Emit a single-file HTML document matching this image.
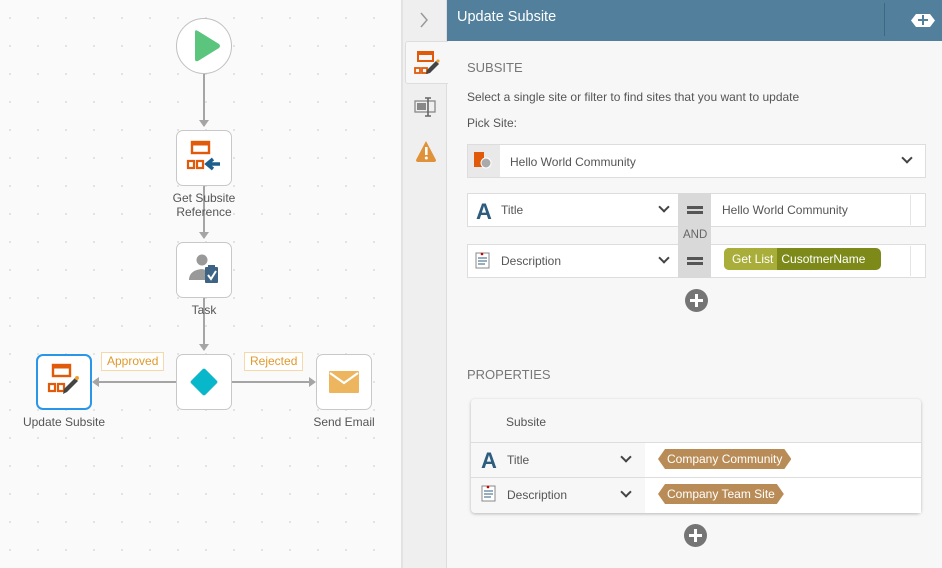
<!DOCTYPE html>
<html><head><meta charset="utf-8"><style>
*{box-sizing:border-box;margin:0;padding:0}
body{width:942px;height:568px;overflow:hidden;font-family:"Liberation Sans",sans-serif;font-size:12px;color:#555;position:relative;background:#fafafa}
.abs{position:absolute}
.canvas{left:0;top:0;width:402px;height:568px;background-color:#fafafa;background-image:radial-gradient(#d8d8d8 0.7px,transparent 1.1px);background-size:28px 28px;background-position:-4px 4px}
.node{position:absolute;width:56px;height:56px;border:1px solid #c8c8c8;border-radius:7px;background:#fff}
.lbl{position:absolute;font-size:12px;color:#555;text-align:center;width:120px}
.tag{position:absolute;border:1px solid #f5d9a8;background:#fff;color:#e09a2a;font-size:12px;height:19px;line-height:17px;padding:0 5px}
.box{position:absolute;background:#fff;border:1px solid #ddd}
.chev{position:absolute;width:8px;height:8px;border-right:2px solid #444;border-bottom:2px solid #444;transform:rotate(45deg)}
.eq{position:absolute;width:16px;height:8px;border-top:3px solid #555;border-bottom:3px solid #555}
.plus{position:absolute;width:23px;height:23px;border-radius:50%;background:#757575}
.plus:before{content:"";position:absolute;left:5px;top:10px;width:13px;height:3px;background:#fff}
.plus:after{content:"";position:absolute;left:10px;top:5px;width:3px;height:13px;background:#fff}
.pill{position:absolute;height:20px;line-height:20px;color:#fff;font-size:12px;background:#b98c57;padding:0 9px;clip-path:polygon(7px 0,calc(100% - 7px) 0,100% 50%,calc(100% - 7px) 100%,7px 100%,0 50%)}
</style></head><body>
<div class="abs canvas"></div>
<div class="abs" style="left:203px;top:74px;width:2px;height:52px;background:#a5a5a5"></div>
<div class="abs" style="left:199px;top:120px;border:5px solid transparent;border-top:7px solid #a5a5a5;border-bottom:0"></div>
<div class="abs" style="left:203px;top:186px;width:2px;height:52px;background:#a5a5a5"></div>
<div class="abs" style="left:199px;top:232px;border:5px solid transparent;border-top:7px solid #a5a5a5;border-bottom:0"></div>
<div class="abs" style="left:203px;top:298px;width:2px;height:52px;background:#a5a5a5"></div>
<div class="abs" style="left:199px;top:344px;border:5px solid transparent;border-top:7px solid #a5a5a5;border-bottom:0"></div>
<div class="abs" style="left:98px;top:381px;width:78px;height:2px;background:#a5a5a5"></div>
<div class="abs" style="left:92px;top:377px;border:5px solid transparent;border-right:7px solid #a5a5a5;border-left:0"></div>
<div class="abs" style="left:232px;top:381px;width:78px;height:2px;background:#a5a5a5"></div>
<div class="abs" style="left:309px;top:377px;border:5px solid transparent;border-left:7px solid #a5a5a5;border-right:0"></div>
<div class="abs" style="left:176px;top:18px;width:56px;height:56px;border-radius:50%;border:1px solid #c0c0c0;background:#fff"></div>
<svg class="abs" style="left:192px;top:29px" width="30" height="34"><path d="M3 3 Q3 0 6 2 L27 15 Q29 17 27 19 L6 32 Q3 33 3 30Z" fill="#5bc57e"/></svg>
<div class="node" style="left:176px;top:130px"></div>
<svg class="abs" style="left:186px;top:140px" width="36" height="36"><rect x="6" y="2" width="17" height="11" fill="none" stroke="#e05a0a" stroke-width="2.4"/><rect x="6" y="2" width="17" height="3.5" fill="#e05a0a"/><rect x="2" y="21" width="6" height="7" fill="none" stroke="#e05a0a" stroke-width="2.2"/><rect x="11" y="21" width="6" height="7" fill="none" stroke="#e05a0a" stroke-width="2.2"/><path d="M34 24 H24 M27 19 L21 24 L27 29" stroke="#1d5f8c" stroke-width="3.5" fill="none"/></svg>
<div class="lbl" style="left:144px;top:191px">Get Subsite</div>
<div class="lbl" style="left:144px;top:205px">Reference</div>
<div class="node" style="left:176px;top:242px"></div>
<svg class="abs" style="left:186px;top:252px" width="36" height="36"><circle cx="16" cy="8" r="5.5" fill="#999"/><path d="M3 27 Q4 18 16 17 L20 18 L20 28 L3 28Z" fill="#999"/><rect x="19" y="15" width="13" height="16" rx="1" fill="#3e6385"/><rect x="22" y="13" width="7" height="3" fill="#3e6385"/><path d="M22 23 L25 27 L30 19" stroke="#fff" stroke-width="2" fill="none"/></svg>
<div class="lbl" style="left:144px;top:303px">Task</div>
<div class="node" style="left:176px;top:354px"></div>
<div class="abs" style="left:194px;top:372px;width:20px;height:20px;background:#09b7cb;transform:rotate(45deg);border-radius:2px"></div>
<div class="node" style="left:36px;top:354px;border:2px solid #2a96e8"></div>
<svg class="abs" style="left:46px;top:363px" width="36" height="36"><rect x="7" y="2" width="17" height="11" fill="none" stroke="#e05a0a" stroke-width="2.4"/><rect x="7" y="2" width="17" height="3.5" fill="#e05a0a"/><rect x="3" y="21" width="6" height="7" fill="none" stroke="#e05a0a" stroke-width="2.2"/><rect x="12" y="21" width="6" height="7" fill="none" stroke="#e05a0a" stroke-width="2.2"/><path d="M17 31 L18 26 L29 15 L32 18 L21 29Z" fill="#444"/><circle cx="31" cy="15" r="2" fill="#f0a030"/></svg>
<div class="lbl" style="left:4px;top:415px">Update Subsite</div>
<div class="node" style="left:316px;top:354px"></div>
<svg class="abs" style="left:328px;top:370px" width="32" height="24"><rect x="1" y="1" width="30" height="22" rx="1" fill="#ecb55e"/><path d="M2 3 L16 13 L30 3" stroke="#fff" stroke-width="2.2" fill="none"/></svg>
<div class="lbl" style="left:284px;top:415px">Send Email</div>
<div class="tag" style="left:101px;top:352px">Approved</div>
<div class="tag" style="left:244px;top:352px">Rejected</div>

<div class="abs" style="left:401px;top:0;width:2px;height:568px;background:#e2e2e2"></div>
<div class="abs" style="left:403px;top:0;width:44px;height:568px;background:#efefef;border-right:1px solid #ddd"></div>
<div class="abs" style="left:447px;top:0;width:495px;height:568px;background:#f7f7f7"></div>
<div class="abs" style="left:447px;top:0;width:495px;height:41px;background:#52809c"></div>
<div class="abs" style="left:457px;top:9px;color:#fff;font-size:14.5px">Update Subsite</div>
<div class="abs" style="left:884px;top:3px;width:1px;height:33px;background:#3f6780"></div>
<div class="abs" style="left:911px;top:14px;width:24px;height:13px;background:#fff;clip-path:polygon(5px 0,19px 0,100% 50%,19px 100%,5px 100%,0 50%)"></div>
<div class="abs" style="left:918px;top:19px;width:10px;height:2px;background:#52809c"></div>
<div class="abs" style="left:922px;top:15px;width:2px;height:10px;background:#52809c"></div>
<svg class="abs" style="left:418px;top:10px" width="12" height="20"><path d="M3 3 L9 10 L3 17" stroke="#999" stroke-width="1.5" fill="none"/></svg>
<div class="abs" style="left:405px;top:41px;width:43px;height:43px;background:#f7f7f7;border:1px solid #ddd;border-right:none;border-radius:3px 0 0 3px"></div>
<svg class="abs" style="left:413px;top:49px" width="28" height="28"><rect x="5" y="3" width="15" height="9" fill="none" stroke="#e05a0a" stroke-width="2"/><rect x="5" y="3" width="15" height="3" fill="#e05a0a"/><rect x="2" y="19" width="5" height="5" fill="none" stroke="#e05a0a" stroke-width="1.8"/><rect x="9" y="19" width="5" height="5" fill="none" stroke="#e05a0a" stroke-width="1.8"/><path d="M13 25 L14 21 L23 12 L26 15 L17 24Z" fill="#444"/><circle cx="25" cy="12" r="1.6" fill="#f0a030"/></svg>
<svg class="abs" style="left:414px;top:96px" width="24" height="22"><rect x="1" y="5" width="20" height="11" fill="none" stroke="#888" stroke-width="1.3"/><rect x="3" y="7" width="9" height="7" fill="#888"/><path d="M14 2 V20 M11 2 H17 M11 20 H17" stroke="#666" stroke-width="1.6"/></svg>
<svg class="abs" style="left:414px;top:139px" width="24" height="24"><path d="M12 2 L22 21 Q22 23 20 23 H4 Q2 23 2 21Z" fill="#e0923a"/><rect x="11" y="8" width="2.6" height="8" fill="#fff"/><circle cx="12.3" cy="19" r="1.5" fill="#fff"/></svg>

<div class="abs" style="left:467px;top:60px;font-size:13px;color:#777">SUBSITE</div>
<div class="abs" style="left:467px;top:90px">Select a single site or filter to find sites that you want to update</div>
<div class="abs" style="left:467px;top:116px">Pick Site:</div>
<div class="box" style="left:467px;top:144px;width:459px;height:34px"></div>
<div class="abs" style="left:468px;top:145px;width:32px;height:32px;background:#e9e9e9"></div>
<svg class="abs" style="left:474px;top:152px" width="20" height="18"><rect x="0" y="0" width="10" height="15" fill="#e05a0a"/><circle cx="12" cy="11" r="5" fill="#aaa" stroke="#fff"/></svg>
<div class="abs" style="left:510px;top:155px">Hello World Community</div>
<div class="chev" style="left:903px;top:154px"></div>

<div class="box" style="left:467px;top:193px;width:459px;height:34px"></div>
<div class="abs" style="left:678px;top:193px;width:33px;height:85px;background:#d9d9d9"></div>
<div class="abs" style="left:476px;top:199px;font-size:22px;font-weight:bold;color:#2d5c7e">A</div>
<div class="abs" style="left:501px;top:203px">Title</div>
<div class="chev" style="left:660px;top:203px"></div>
<div class="eq" style="left:687px;top:206px"></div>
<div class="abs" style="left:722px;top:203px">Hello World Community</div>
<div class="abs" style="left:910px;top:195px;width:1px;height:30px;background:#e4e4e4"></div>
<div class="abs" style="left:683px;top:229px;font-size:11.5px;color:#666">AND</div>
<div class="box" style="left:467px;top:244px;width:459px;height:34px"></div>
<div class="abs" style="left:678px;top:244px;width:33px;height:34px;background:#d9d9d9"></div>
<svg class="abs" style="left:474px;top:252px" width="18" height="18"><rect x="2" y="1" width="13" height="15" fill="#fff" stroke="#888"/><path d="M4 6 H13 M4 9 H13 M4 12 H11" stroke="#2d5c7e"/><circle cx="8" cy="2" r="1.3" fill="#c00"/></svg>
<div class="abs" style="left:501px;top:254px">Description</div>
<div class="chev" style="left:660px;top:254px"></div>
<div class="eq" style="left:687px;top:257px"></div>
<div class="abs" style="left:910px;top:246px;width:1px;height:30px;background:#e4e4e4"></div>
<div class="abs" style="left:724px;top:248px;width:157px;height:22px;border-radius:5px;background:#7d8a1a;overflow:hidden;color:#fff;font-size:12px;line-height:22px">
<span style="background:#a9ad3a;padding:0 4px 0 8px;display:inline-block">Get List</span><span style="padding-left:4px">CusotmerName</span></div>
<div class="plus" style="left:685px;top:289px"></div>

<div class="abs" style="left:467px;top:367px;font-size:13px;color:#777">PROPERTIES</div>
<div class="abs" style="left:471px;top:399px;width:450px;height:114px;background:#f7f7f7;border-radius:4px;box-shadow:0 1px 3px rgba(0,0,0,.25)"></div>
<div class="abs" style="left:506px;top:415px">Subsite</div>
<div class="abs" style="left:645px;top:443px;width:276px;height:70px;background:#fff"></div>
<div class="abs" style="left:471px;top:442px;width:450px;height:1px;background:#ddd"></div>
<div class="abs" style="left:471px;top:477px;width:450px;height:1px;background:#ddd"></div>
<div class="abs" style="left:481px;top:448px;font-size:22px;font-weight:bold;color:#2d5c7e">A</div>
<div class="abs" style="left:507px;top:453px">Title</div>
<div class="chev" style="left:622px;top:453px"></div>
<svg class="abs" style="left:480px;top:485px" width="18" height="18"><rect x="2" y="1" width="13" height="15" fill="#fff" stroke="#888"/><path d="M4 6 H13 M4 9 H13 M4 12 H11" stroke="#2d5c7e"/><circle cx="8" cy="2" r="1.3" fill="#c00"/></svg>
<div class="abs" style="left:507px;top:488px">Description</div>
<div class="chev" style="left:622px;top:488px"></div>
<div class="pill" style="left:658px;top:449px">Company Community</div>
<div class="pill" style="left:658px;top:484px">Company Team Site</div>
<div class="plus" style="left:684px;top:524px"></div>
</body></html>
